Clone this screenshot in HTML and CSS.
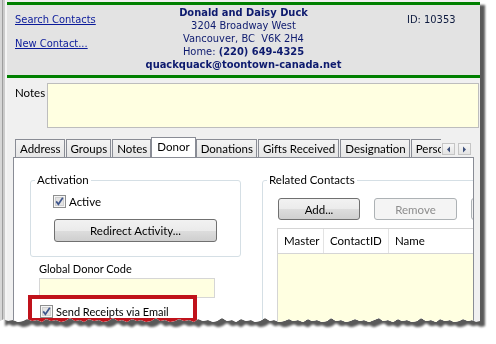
FILE: index.html
```html
<!DOCTYPE html>
<html lang="en">

<head>
    <meta charset="UTF-8">
    <meta name="viewport" content="width=device-width, initial-scale=1.0">
    <title>Contact - Donor</title>
    <link rel="stylesheet" href="styles.css">
</head>

<body>
    <div class="shot">
        <div class="window">
            <header class="contact-bar">
                <nav class="links">
                    <a href="#">Search Contacts</a>
                    <a href="#">New Contact...</a>
                </nav>
                <address class="card">
                    <b>Donald and Daisy Duck</b>
                    <span>3204 Broadway West</span>
                    <span>Vancouver, BC&nbsp; V6K 2H4</span>
                    <span>Home: <b>(220) 649-4325</b></span>
                    <b>quackquack@toontown-canada.net</b>
                </address>
                <div class="contact-id">ID: 10353</div>
            </header>

            <div class="notes-row">
                <label class="notes-label">Notes</label>
                <div class="notes-box"></div>
            </div>

            <div class="tabs">
                <div class="tab-strip">
                    <div class="tab-list">
                        <div class="tab">Address</div>
                        <div class="tab">Groups</div>
                        <div class="tab">Notes</div>
                        <div class="tab active">Donor</div>
                        <div class="tab">Donations</div>
                        <div class="tab">Gifts Received</div>
                        <div class="tab">Designation</div>
                        <div class="tab">Personal</div>
                    </div>
                    <div class="tab-scroll">
                        <span class="arrow-btn">
                            <svg width="5" height="7" viewBox="0 0 5 7"><path d="M4 0.5 L1 3.5 L4 6.5 Z" fill="#3d4f7a"/></svg>
                        </span>
                        <span class="arrow-btn">
                            <svg width="5" height="7" viewBox="0 0 5 7"><path d="M1 0.5 L4 3.5 L1 6.5 Z" fill="#3d4f7a"/></svg>
                        </span>
                    </div>
                </div>

                <div class="tab-panel">
                    <div class="left-col">
                        <div class="group activation">
                            <div class="group-title">Activation</div>
                            <div class="check-row active-row">
                                <svg class="check" width="13" height="13" viewBox="0 0 13 13">
                                    <rect x="0.5" y="0.5" width="12" height="12" fill="#f6f6f6" stroke="#8e8f8f"/>
                                    <rect x="2.5" y="2.5" width="8" height="8" fill="#e4e4e4" stroke="#cfcfcf"/>
                                    <path d="M3.2 6.4 L5.4 9.2 L9.8 2.8" fill="none" stroke="#3e558c" stroke-width="1.7"/>
                                </svg>
                                <span>Active</span>
                            </div>
                            <button class="btn redirect">Redirect Activity...</button>
                        </div>

                        <div class="field-label">Global Donor Code</div>
                        <div class="text-input"></div>

                        <div class="check-row receipts-row">
                            <svg class="check" width="13" height="13" viewBox="0 0 13 13">
                                <rect x="0.5" y="0.5" width="12" height="12" fill="#f6f6f6" stroke="#8e8f8f"/>
                                <rect x="2.5" y="2.5" width="8" height="8" fill="#e4e4e4" stroke="#cfcfcf"/>
                                <path d="M3.2 6.4 L5.4 9.2 L9.8 2.8" fill="none" stroke="#3e558c" stroke-width="1.7"/>
                            </svg>
                            <span>Send Receipts via Email</span>
                        </div>
                    </div>

                    <div class="group related">
                        <div class="group-title">Related Contacts</div>
                        <div class="btn-row">
                            <button class="btn add">Add...</button>
                            <button class="btn remove" disabled>Remove</button>
                            <button class="btn more" disabled></button>
                        </div>
                        <div class="grid">
                            <div class="grid-head">
                                <div class="col master">Master</div>
                                <div class="col cid">ContactID</div>
                                <div class="col name">Name</div>
                            </div>
                            <div class="grid-body"></div>
                        </div>
                    </div>
                </div>
            </div>

            <div class="highlight"></div>
        </div>
    </div>
</body>

</html>
```

FILE: styles.css
```css
* {
    box-sizing: border-box;
}

body {
    margin: 0;
    background-color: #fff;
    font-family: Lato, "Noto Sans", sans-serif;
    font-size: 11px;
    color: #000;
}

.shot {
    width: 496px;
    height: 344px;
    filter: drop-shadow(5px 5px 1px rgba(0, 0, 0, 0.65));
}

.window {
    position: relative;
    width: 480px;
    height: 330px;
    padding: 2px 0 0 7px;
    display: flex;
    flex-direction: column;
    background-color: #f0f0f0;
    background-image: linear-gradient(to right, #d6d6d6 0 2px, #9d9d9d 2px 3px, #cbcbcb 3px 5px, #f4f4f4 5px 7px, transparent 7px);
    overflow: hidden;
    clip-path: polygon(0 0, 100% 0, 100% 321px,
        476px 322px, 472px 320px, 468px 321px, 463px 319px, 459px 321px, 454px 322px, 450px 320px, 445px 321px,
        440px 319px, 436px 322px, 431px 320px, 426px 321px, 421px 318px, 417px 321px, 412px 322px, 407px 320px,
        402px 321px, 398px 319px, 393px 322px, 388px 320px, 383px 321px, 379px 318px, 374px 320px, 369px 322px,
        364px 320px, 360px 321px, 355px 319px, 350px 321px, 346px 322px, 341px 320px, 336px 321px, 331px 318px,
        327px 321px, 322px 322px, 317px 320px, 312px 321px, 308px 319px, 303px 322px, 298px 320px, 293px 321px,
        289px 319px, 284px 321px, 279px 322px, 274px 320px, 270px 321px, 265px 318px, 260px 321px, 255px 322px,
        251px 320px, 246px 321px, 241px 319px, 236px 322px, 232px 320px, 227px 321px, 222px 318px, 217px 321px,
        213px 322px, 208px 320px, 203px 321px, 198px 319px, 194px 322px, 189px 320px, 184px 321px, 179px 319px,
        175px 321px, 170px 322px, 165px 320px, 160px 321px, 156px 318px, 151px 321px, 146px 322px, 141px 320px,
        137px 321px, 132px 319px, 127px 322px, 122px 320px, 118px 321px, 113px 318px, 108px 321px, 103px 322px,
        99px 320px, 94px 321px, 89px 319px, 84px 322px, 80px 320px, 75px 321px, 70px 318px, 65px 321px,
        61px 322px, 56px 320px, 51px 321px, 46px 319px, 42px 322px, 37px 320px, 32px 321px, 27px 319px,
        23px 321px, 18px 322px, 13px 320px, 8px 321px, 4px 319px, 0 321px);
}

/* header bar */
.contact-bar {
    height: 76px;
    display: grid;
    grid-template-columns: 130px 1fr 130px;
    background-color: #e3e3e3;
    border-top: 3px solid #008000;
    border-bottom: 3px solid #008000;
    font-family: "DejaVu Sans Condensed", "DejaVu Sans", sans-serif;
    font-stretch: condensed;
    font-size: 11px;
}

.links {
    display: flex;
    flex-direction: column;
    gap: 10px;
    padding: 8px 0 0 8px;
    line-height: 14px;
}

.links a {
    color: #0a1a9a;
    align-self: flex-start;
}

.card {
    display: flex;
    flex-direction: column;
    align-items: center;
    padding-top: 1px;
    font-style: normal;
    line-height: 13px;
    color: #0d1a6e;
    white-space: nowrap;
}

.contact-id {
    padding: 8px 0 0 57px;
    line-height: 14px;
    color: #0d1a3e;
}

/* notes */
.notes-row {
    display: flex;
    margin-top: 5px;
}

.notes-label {
    width: 40px;
    padding: 3px 0 0 8px;
    font-size: 11.5px;
}

.notes-box {
    flex: 1;
    height: 45px;
    margin-right: 1px;
    background-color: #ffffe1;
    border: 1px solid #bdbdbd;
}

/* tabs */
.tabs {
    flex: 1;
    display: flex;
    flex-direction: column;
    width: 461px;
    margin: 9px 0 0 6px;
    min-height: 0;
}

.tab-strip {
    display: flex;
    height: 20px;
    padding-left: 2px;
}

.tab-list {
    position: relative;
    z-index: 1;
    flex: 1;
    display: flex;
    align-items: flex-end;
    gap: 1px;
    overflow: hidden;
}

.tab {
    flex-shrink: 0;
    height: 18px;
    padding: 0 3px 0 4px;
    line-height: 17px;
    font-size: 11.5px;
    border: 1px solid #898c95;
    border-bottom: none;
    background: linear-gradient(#f3f3f3, #e6e6e6);
    white-space: nowrap;
}

.tab.active {
    position: relative;
    z-index: 1;
    height: 21px;
    margin: 0 -1px -1px;
    padding: 0 5px;
    line-height: 17px;
    background: #fff;
}

.tab-scroll {
    display: flex;
    gap: 3px;
    align-items: flex-end;
    padding: 0 3px 2px 1px;
}

.arrow-btn {
    width: 13px;
    height: 12px;
    display: flex;
    align-items: center;
    justify-content: center;
    border: 1px solid #c5c5c5;
    background: linear-gradient(#f6f6f6, #e4e4e4);
}

.tab-panel {
    flex: 1;
    display: flex;
    gap: 21px;
    padding: 0 0 0 16px;
    background-color: #fff;
    border: 1px solid #898c95;
    overflow: hidden;
}

/* group boxes */
.group {
    margin-top: 22px;
    border: 1px solid #d5dfe5;
    border-radius: 3px;
}

.group-title {
    width: fit-content;
    margin: -8px 0 0 4px;
    padding: 0 2px;
    line-height: 14px;
    font-size: 11.5px;
    background-color: #fff;
}

.left-col {
    width: 211px;
    flex-shrink: 0;
}

.activation {
    height: 77px;
}

.check-row {
    display: flex;
    align-items: center;
    gap: 3px;
    line-height: 13px;
    font-size: 11.5px;
}

.check {
    flex-shrink: 0;
}

.active-row {
    margin: 8px 0 0 22px;
}

.btn {
    display: block;
    height: 23px;
    padding: 0;
    font-family: inherit;
    font-size: 11.5px;
    color: #000;
    border: 1px solid #707070;
    border-radius: 3px;
    background: linear-gradient(#f2f2f2 0%, #ebebeb 50%, #dddddd 51%, #cfcfcf 100%);
}

.btn:disabled {
    color: #8d8d8d;
    border-color: #adb2b5;
    background: #f4f4f4;
}

.redirect {
    width: 163px;
    margin: 11px 0 0 23px;
}

.field-label {
    margin-top: 5px;
    padding-left: 9px;
    line-height: 14px;
}

.text-input {
    width: 176px;
    height: 20px;
    margin: 2px 0 0 9px;
    background-color: #ffffe1;
    border: 1px solid #d6d6d6;
}

.receipts-row {
    margin: 7px 0 0 10px;
    font-size: 11px;
}

/* related contacts */
.related {
    flex-shrink: 0;
    width: 300px;
}

.btn-row {
    display: flex;
    gap: 14px;
    margin: 11px 0 0 15px;
}

.btn-row .btn {
    width: 82px;
    height: 22px;
}

.btn-row .remove {
    width: 83px;
}

.grid {
    margin: 8px 0 0 14px;
    border: 1px solid #d5d5d5;
    border-right: none;
    font-size: 11.5px;
}

.grid-head {
    display: flex;
    height: 25px;
    background-color: #fff;
    border-bottom: 1px solid #d5d5d5;
}

.col {
    padding: 5px 0 0 6px;
    border-right: 1px solid #e3e3e3;
}

.master {
    width: 46px;
}

.cid {
    width: 65px;
}

.name {
    flex: 1;
}

.grid-body {
    height: 80px;
    background-color: #ffffe1;
}

/* callout round the email option */
.highlight {
    position: absolute;
    left: 28px;
    top: 295px;
    width: 169px;
    height: 27px;
    border: 4px solid #c0121b;
}
```
